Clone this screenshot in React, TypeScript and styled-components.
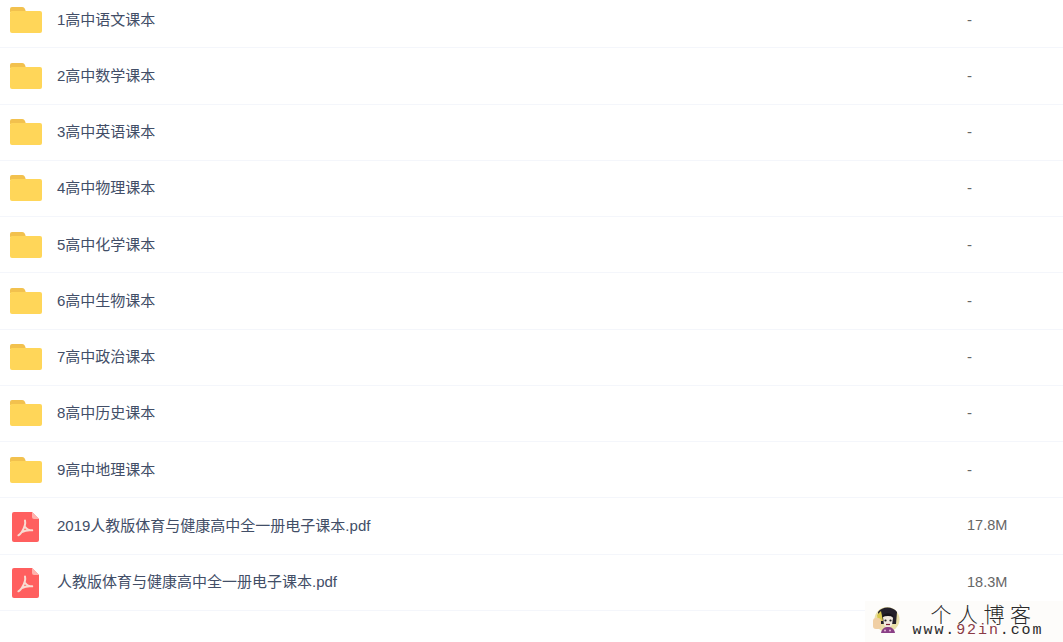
import React from "react"
import styled, { createGlobalStyle } from "styled-components"

const GlobalStyle = createGlobalStyle`
  html, body {
    margin: 0;
    padding: 0;
    background: #fff;
    overflow: hidden;
  }
`

const Page = styled.div`
  position: relative;
  width: 1063px;
  height: 642px;
  overflow: hidden;
  font-family: "Liberation Sans", "Noto Sans CJK SC", sans-serif;
  font-size: 15px;
  color: #424e67;
`

// the list is scrolled a little, so the first row is cut by the window
const List = styled.ul`
  list-style: none;
  margin: -7.9px 0 0;
  padding: 0;
`

const Row = styled.li`
  display: flex;
  align-items: center;
  height: 56.25px;
  box-sizing: border-box;
  border-bottom: 1px solid #f4f6fb;
`

const IconCell = styled.div`
  flex: none;
  width: 57px;
  padding-left: 10px;
  box-sizing: border-box;
  display: flex;
  align-items: center;
`

const Name = styled.div`
  flex: none;
  width: 910px;
  white-space: nowrap;
  line-height: 20px;
`

const Size = styled.div<{ $empty: boolean }>`
  color: #666;
  font-size: ${({ $empty }) => ($empty ? "15px" : "14.5px")};
  white-space: nowrap;
  line-height: 20px;
  padding-bottom: ${({ $empty }) => ($empty ? "0" : "1px")};
`

const Watermark = styled.div`
  position: absolute;
  right: 0;
  bottom: 0;
  width: 198px;
  height: 41px;
  background: #fdfcfa;
  display: flex;
  align-items: center;
  padding: 0 0 3px 8px;
  box-sizing: border-box;
  gap: 12px;
`

const MarkText = styled.div`
  display: flex;
  flex-direction: column;
  align-items: center;
  width: 132px;
  color: #2a2a2a;
`

const MarkTitle = styled.div`
  font-family: "Noto Sans CJK SC", sans-serif;
  font-weight: 300;
  font-size: 21px;
  letter-spacing: 5.5px;
  padding-left: 11px;
  height: 20px;
  line-height: 20px;
  white-space: nowrap;
`

const MarkUrl = styled.div`
  font-family: "Liberation Mono", monospace;
  font-size: 15px;
  height: 15px;
  line-height: 15px;
  letter-spacing: 1.9px;
  white-space: nowrap;
`

const MarkAccent = styled.span`
  color: #8b3a45;
`

const PdfSvg = styled.svg`
  margin: 2px 0 0 2px;
`

function FolderIcon() {
  return (
    <svg width="32" height="28" viewBox="0 0 32 28">
      <path d="M0 3a2 2 0 0 1 2-2h10a3 3 0 0 1 3 2l1 3H0z" fill="#f2c14e" />
      <rect x="0" y="5" width="32" height="22" rx="2" fill="#ffd659" />
    </svg>
  )
}

function PdfIcon() {
  return (
    <PdfSvg width="27" height="30" viewBox="0 0 27 30">
      <path
        d="M2 0h18l7 7v21a2 2 0 0 1-2 2H2a2 2 0 0 1-2-2V2a2 2 0 0 1 2-2z"
        fill="#ff5f5f"
      />
      <path d="M20 0l7 7h-5a2 2 0 0 1-2-2z" fill="#ffb3ad" />
      <path
        d="M13 8.500c0.900 3.500-1 8-3.200 11.500c-1 1.500-2.400 2.800-3.400 3.300M13.200 15c1.400 2 3.600 3.300 7 3.300M9.800 20c2.800-1.400 6-2.200 10.400-1.700"
        fill="none"
        stroke="#f9dcd2"
        strokeWidth="2"
        strokeLinecap="round"
      />
    </PdfSvg>
  )
}

function Avatar() {
  return (
    <svg width="27" height="28" viewBox="0 0 27 28">
      <circle cx="14" cy="13.500" r="12.500" fill="#e9dfa8" />
      <path d="M5 6c4-6 15-6 19 0l-1 12H6z" fill="#24202a" />
      <path d="M4 9l4-4 2 10H5z" fill="#d9c94f" />
      <path d="M10 11c3-2 8-2 10 1l-1 7c-2 3-7 3-8 0z" fill="#f1e9df" />
      <path d="M9 11c3-5 9-5 12 0c-4-1.500-8-1.500-12 0z" fill="#17141a" />
      <circle cx="12.500" cy="14.500" r="1.100" fill="#222" />
      <circle cx="17.500" cy="14.500" r="1.100" fill="#222" />
      <path d="M13 18.500h4" stroke="#7a2430" strokeWidth="1.200" />
      <path d="M8 27c1-5 4-6 7-6s6 1 7 6z" fill="#8a3f86" />
      <circle cx="12" cy="24.500" r="1" fill="#e8b9d8" />
      <circle cx="17" cy="24.500" r="1" fill="#e8b9d8" />
      <rect x="0" y="12" width="8" height="11" rx="3" fill="#f0cfa4" />
    </svg>
  )
}

const items = [
  { kind: "folder", name: "1高中语文课本", size: "-" },
  { kind: "folder", name: "2高中数学课本", size: "-" },
  { kind: "folder", name: "3高中英语课本", size: "-" },
  { kind: "folder", name: "4高中物理课本", size: "-" },
  { kind: "folder", name: "5高中化学课本", size: "-" },
  { kind: "folder", name: "6高中生物课本", size: "-" },
  { kind: "folder", name: "7高中政治课本", size: "-" },
  { kind: "folder", name: "8高中历史课本", size: "-" },
  { kind: "folder", name: "9高中地理课本", size: "-" },
  { kind: "pdf", name: "2019人教版体育与健康高中全一册电子课本.pdf", size: "17.8M" },
  { kind: "pdf", name: "人教版体育与健康高中全一册电子课本.pdf", size: "18.3M" },
]

export default function App() {
  return (
    <Page>
      <GlobalStyle />
      <List>
        {items.map((item) => (
          <Row key={item.name}>
            <IconCell>{item.kind === "folder" ? <FolderIcon /> : <PdfIcon />}</IconCell>
            <Name>{item.name}</Name>
            <Size $empty={item.size === "-"}>{item.size}</Size>
          </Row>
        ))}
      </List>
      <Watermark>
        <Avatar />
        <MarkText>
          <MarkTitle>个人博客</MarkTitle>
          <MarkUrl>
            www.<MarkAccent>92in</MarkAccent>.com
          </MarkUrl>
        </MarkText>
      </Watermark>
    </Page>
  )
}
